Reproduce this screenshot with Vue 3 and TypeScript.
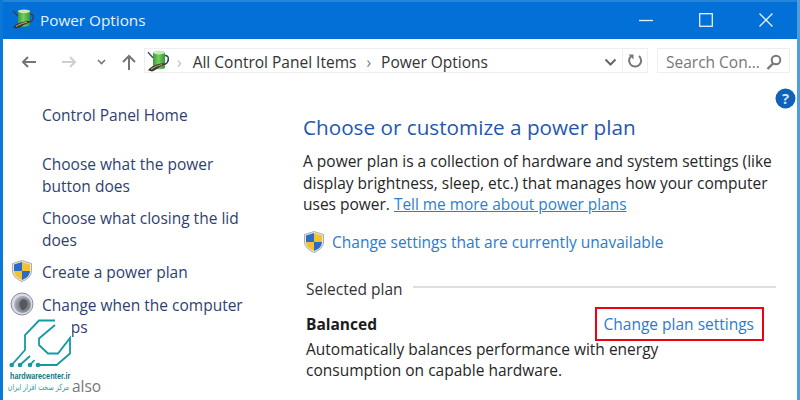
<script setup lang="ts">
const sideLinks = [
  { text: 'Choose what the power button does' },
  { text: 'Choose what closing the lid does' },
]
</script>

<template>
  <div class="window">
    <svg class="defs" width="0" height="0">
      <defs>
        <linearGradient id="cell" x1="0" y1="0" x2="1" y2="0">
          <stop offset="0" stop-color="#3f9a3a" />
          <stop offset=".45" stop-color="#72cf5f" />
          <stop offset="1" stop-color="#3c9437" />
        </linearGradient>
        <radialGradient id="dial" cx=".6" cy=".55" r=".6">
          <stop offset="0" stop-color="#5f6168" />
          <stop offset=".7" stop-color="#8f939d" />
          <stop offset="1" stop-color="#b4b9c5" />
        </radialGradient>
        <symbol id="battery" viewBox="0 0 22 20" preserveAspectRatio="none">
          <path d="M1 2l5 5" stroke="#33415f" stroke-width="1.300" fill="none" />
          <path d="M18 5c4.500 0 4.500 6 0 8" stroke="#33415f" stroke-width="1.500" fill="none" />
          <path d="M6 2v14c0 2 12 2 12 0V2z" fill="url(#cell)" />
          <ellipse cx="12" cy="2.200" rx="6" ry="1.800" fill="#c5ecb8" />
          <path d="M1 18.500c3-4 9-6 16-6.500l2 1c-5 1-9 5-14 6.500z" fill="#3a3632" />
          <path d="M4 17.500c3-2 7-3.500 11-4.300" stroke="#c9a878" stroke-width="1" fill="none" />
        </symbol>
        <symbol id="shield" viewBox="0 0 20 22">
          <path d="M10 .5l9.500 3v7.500c0 5-4.500 8.500-9.500 10.500C5 19.500.500 16 .500 11V3.500z" fill="#e6e6e6" stroke="#8f8f8f" stroke-width=".7" />
          <path d="M10 2L2 4.500V11h8z" fill="#2a6cc6" />
          <path d="M10 2l8 2.500V11h-8z" fill="#f4c22f" />
          <path d="M2 11h8v9c-4-1.500-8-4.500-8-9z" fill="#f4c22f" />
          <path d="M18 11h-8v9c4-1.500 8-4.500 8-9z" fill="#2a6cc6" />
        </symbol>
      </defs>
    </svg>

    <header class="titlebar">
      <svg class="app-icon" width="22" height="20"><use href="#battery" /></svg>
      <span class="title">Power Options</span>
      <div class="controls">
        <svg width="14" height="14" viewBox="0 0 14 14"><path d="M0 7.500h14" stroke="#e6f0fb" stroke-width="1.300" /></svg>
        <svg width="14" height="14" viewBox="0 0 14 14"><rect x=".7" y=".7" width="12.600" height="12.600" fill="none" stroke="#e6f0fb" stroke-width="1.300" /></svg>
        <svg width="14" height="14" viewBox="0 0 14 14"><path d="M.5.5l13 13M13.500.5l-13 13" stroke="#e6f0fb" stroke-width="1.300" /></svg>
      </div>
    </header>

    <div class="toolbar">
      <svg class="nav back" width="16" height="14" viewBox="0 0 16 14"><path d="M15 7H2M7 2L2 7l5 5" stroke="#757575" stroke-width="2" fill="none" /></svg>
      <svg class="nav forward" width="16" height="14" viewBox="0 0 16 14"><path d="M1 7h13M9 2l5 5-5 5" stroke="#cfcfcf" stroke-width="2" fill="none" /></svg>
      <svg class="nav recent" width="9" height="6" viewBox="0 0 9 6"><path d="M1 1l3.500 3.500L8 1" stroke="#777" stroke-width="1.600" fill="none" /></svg>
      <svg class="nav up" width="16" height="17" viewBox="0 0 16 17"><path d="M8 16V2M2 8l6-6 6 6" stroke="#757575" stroke-width="2" fill="none" /></svg>
      <div class="address">
        <svg class="addr-icon" width="22" height="22"><use href="#battery" /></svg>
        <span class="crumb-sep first">›</span>
        <span class="crumb">All Control Panel Items</span>
        <span class="crumb-sep">›</span>
        <span class="crumb">Power Options</span>
        <svg class="addr-chevron" width="13" height="8" viewBox="0 0 13 8"><path d="M1.500 1.500l5 5 5-5" stroke="#666" stroke-width="2" fill="none" /></svg>
        <span class="refresh">
          <svg width="16" height="16" viewBox="0 0 16 16"><path d="M4 3.200A6 6 0 1 0 12 3" stroke="#777" stroke-width="2" fill="none" /><path d="M1.500 1.500h5v5z" fill="#777" /></svg>
        </span>
      </div>
      <div class="search">
        <span>Search Con...</span>
        <svg width="16" height="16" viewBox="0 0 16 16"><circle cx="10" cy="6" r="4.300" stroke="#777" stroke-width="2" fill="none" /><path d="M7 9.500L1.500 15" stroke="#777" stroke-width="2.400" /></svg>
      </div>
    </div>

    <div class="body">
      <nav class="sidebar">
        <a class="side-link home">Control Panel Home</a>
        <a v-for="link in sideLinks" :key="link.text" class="side-link block">{{ link.text }}</a>
        <div class="side-row">
          <svg class="shield" width="20" height="22"><use href="#shield" /></svg>
          <a class="side-link">Create a power plan</a>
        </div>
        <div class="side-row moon">
          <svg class="moon-icon" width="24" height="24" viewBox="0 0 24 24">
            <circle cx="12" cy="12" r="11" fill="#d8dce4" stroke="#8a8e97" />
            <circle cx="12.500" cy="12.500" r="8.500" fill="url(#dial)" />
            <path d="M13 7c2.800.5 4.500 1.500 4.500 4 0 3.200-1.800 5.500-4.500 7.500-2.200-1.500-3.500-3.800-3.500-6.500 0-2.300 1.300-4 3.500-5z" fill="#56585e" />
          </svg>
          <a class="side-link">Change when the computer sleeps</a>
        </div>
        <div class="see-also">See also</div>
      </nav>

      <main class="main">
        <svg class="help" width="21" height="21" viewBox="0 0 21 21"><circle cx="10.500" cy="10.500" r="10" fill="#0f62b8" /><text x="10.500" y="16" text-anchor="middle" fill="#cfe3f7" font-size="15" font-weight="700" font-family="Open Sans, sans-serif">?</text></svg>
        <h1 class="heading">Choose or customize a power plan</h1>
        <p class="intro">
          A power plan is a collection of hardware and system settings (like display brightness, sleep, etc.) that manages how your computer uses power.
          <a class="tell">Tell me more about power plans</a>
        </p>
        <div class="unavailable">
          <svg width="20" height="22"><use href="#shield" /></svg>
          <a>Change settings that are currently unavailable</a>
        </div>
        <div class="selected">
          <span>Selected plan</span>
          <i class="rule"></i>
        </div>
        <div class="plan-row">
          <strong>Balanced</strong>
          <a class="plan-link">Change plan settings</a>
        </div>
        <p class="plan-desc">Automatically balances performance with energy consumption on capable hardware.</p>
      </main>
    </div>

    <div class="watermark">
      <svg class="wm-mark" width="64" height="52" viewBox="0 0 64 52">
        <g fill="none" stroke="#159aa3" stroke-width="1.800">
          <path d="M47 2.500H31L17 17v15L3.700 47" />
          <path d="M47 7L31 20.500v6.500l9 8.500h10L62 20v15.500L48.700 47H30" />
          <path d="M12 47l10-9M22 47l4.500-5" />
        </g>
        <g fill="#159aa3">
          <circle cx="3.700" cy="47" r="2.300" />
          <circle cx="12" cy="47" r="2.300" />
          <circle cx="22" cy="47" r="2.300" />
          <circle cx="30" cy="47" r="2.300" />
        </g>
      </svg>
      <div class="wm-name">hardwarecenter.ir</div>
      <div class="wm-fa" dir="rtl">مرکز سخت افزار ایران</div>
    </div>
  </div>
</template>

<style>
html, body {
  margin: 0;
  background: #fff;
}
</style>

<style scoped>
.window {
  position: relative;
  width: 800px;
  height: 400px;
  overflow: hidden;
  box-sizing: border-box;
  border-left: 3px solid #0a78d7;
  border-right: 3px solid #4b9ee0;
  background: #fff;
  font-family: "Open Sans", "Noto Sans", sans-serif;
  font-size: 15.5px;
  color: #262626;
}

.defs {
  position: absolute;
}

.titlebar {
  height: 39px;
  margin-left: -3px;
  margin-right: -3px;
  padding: 0 23px 0 12px;
  box-sizing: border-box;
  display: flex;
  align-items: center;
  background: #0270d6;
  border-top: 2px solid #2186dc;
  color: #fff;
}

.app-icon {
  margin-right: 6px;
  margin-top: -3px;
}

.title {
  font-size: 15.3px;
  color: #e8f1fb;
  margin-top: -2px;
}

.controls {
  margin-left: auto;
  display: flex;
  gap: 46px;
  padding-right: 4px;
  margin-top: -2px;
}

.toolbar {
  height: 42px;
  display: flex;
  align-items: center;
  padding-top: 1px;
  box-sizing: border-box;
}

.nav {
  flex: none;
  margin-top: 3px;
}

.back {
  margin-left: 18px;
}

.forward {
  margin-left: 24px;
}

.recent {
  margin-left: 20px;
}

.up {
  margin-left: 15px;
}

.address {
  margin-left: 7px;
  width: 504px;
  height: 25px;
  flex: none;
  display: flex;
  align-items: center;
  border: 1px solid #eeeeee;
  box-sizing: border-box;
  padding-left: 2px;
  color: #333;
}

.crumb,
.crumb-sep {
  padding-top: 2px;
}

.crumb-sep {
  margin: 0 10px;
  color: #777;
}

.crumb-sep.first {
  margin-left: 8px;
  margin-right: 11px;
  color: #bbb;
}

.addr-chevron {
  margin-left: auto;
  margin-right: 5px;
  margin-top: 2px;
}

.refresh {
  width: 25px;
  height: 23px;
  border-left: 1px solid #eeeeee;
  display: flex;
  align-items: center;
  justify-content: center;
  padding-top: 1px;
  box-sizing: border-box;
}

.search {
  margin-left: 9px;
  width: 133px;
  height: 25px;
  flex: none;
  box-sizing: border-box;
  border: 1px solid #eeeeee;
  display: flex;
  align-items: center;
  justify-content: space-between;
  padding: 2px 7px 0 8px;
  color: #777;
}

.body {
  display: flex;
}

.sidebar {
  width: 300px;
  flex: none;
  padding-top: 23px;
  box-sizing: border-box;
  line-height: 22px;
}

.side-link {
  color: #2f3f70;
}

.block,
.home {
  display: block;
  padding-left: 39px;
}

.home {
  margin-bottom: 27px;
}

.block {
  margin-bottom: 10px;
  width: 205px;
}

.side-row {
  display: flex;
  align-items: flex-start;
  gap: 10px;
  padding-left: 9px;
  margin-bottom: 11px;
  width: 250px;
}

.shield {
  margin-top: -1px;
}

.moon {
  gap: 8px;
  padding-left: 7px;
}

.moon-icon {
  margin-top: -2px;
}

.moon .side-link {
  width: 208px;
}

.see-also {
  padding-left: 39px;
  margin-top: 37px;
  color: #777;
}

.main {
  position: relative;
  flex: 1;
  padding-right: 10px;
  padding-top: 32px;
  min-width: 0;
}

.help {
  position: absolute;
  top: 7px;
  right: 1px;
}

.heading {
  margin: 0 0 10px;
  font-size: 20.700px;
  font-weight: 400;
  color: #1f57ae;
  line-height: 28px;
}

.intro {
  margin: 0 0 15px;
  line-height: 21.500px;
}

.tell {
  color: #2a80d4;
  text-decoration: underline;
  font-size: 15.400px;
}

.unavailable {
  display: flex;
  align-items: center;
  gap: 8px;
  margin-left: 1px;
  color: #2a7bd0;
}

.selected {
  display: flex;
  align-items: center;
  gap: 10px;
  margin: 25px 0 0 3px;
  color: #333;
}

.rule {
  flex: 1;
  height: 2px;
  margin-right: 11px;
  margin-top: -3px;
  background: #dedede;
}

.plan-row {
  display: flex;
  align-items: center;
  justify-content: space-between;
  height: 22px;
  margin: 13px 0 0 3px;
  padding-right: 23px;
}

.plan-row strong {
  color: #1c1c1c;
  font-weight: 700;
}

.plan-link {
  box-sizing: border-box;
  height: 34px;
  display: flex;
  align-items: center;
  padding: 0 8px 0 7px;
  border: 2px solid #f00010;
  color: #2a7bd0;
}

.plan-desc {
  margin: 4px 0 0 3px;
  line-height: 21px;
  width: 380px;
}

.watermark {
  position: absolute;
  left: 5px;
  top: 318px;
  width: 64px;
  height: 82px;
  background: #fff;
  line-height: 1;
}

.wm-mark {
  display: block;
}

.wm-name {
  font-family: "Liberation Sans", sans-serif;
  font-size: 9.500px;
  font-weight: 700;
  color: #13757e;
  margin: 1px 0 0 2px;
  white-space: nowrap;
  transform: scaleX(0.76);
  transform-origin: left center;
}

.wm-fa {
  font-family: "DejaVu Sans", sans-serif;
  font-size: 8.500px;
  color: #2a9ca5;
  margin-top: 2px;
  width: 61px;
  white-space: nowrap;
  transform: scaleX(0.74);
  transform-origin: right center;
}
</style>
